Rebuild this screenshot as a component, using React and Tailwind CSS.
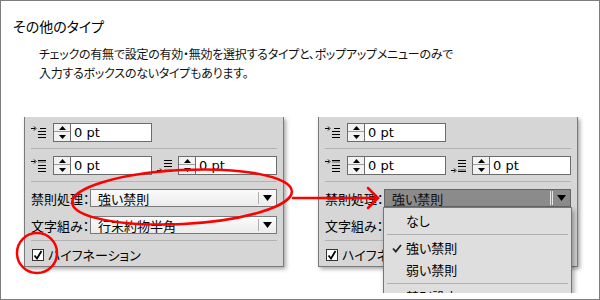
import React from "react";

const jp = "font-['Noto_Sans_CJK_JP',sans-serif] [font-feature-settings:'palt']";

const IndentIcon = ({ kind }) => (
  <svg width="16" height="14" viewBox="0 0 16 14" className="shrink-0">
    {kind !== "after" && (
      <g stroke="#000" strokeWidth="1" fill="none">
        <path d="M0 2.5h4" />
        <path d="M3 0.5l2 2-2 2" />
      </g>
    )}
    {kind === "after" && (
      <g stroke="#000" strokeWidth="1" fill="none">
        <path d="M0 11.5h4" />
        <path d="M3 9.5l2 2-2 2" />
      </g>
    )}
    <g fill="#000">
      {kind === "first" && (
        <>
          <rect x="9" y="2" width="6" height="1" />
          <rect x="7" y="5" width="8" height="1" />
          <rect x="7" y="8" width="8" height="1" />
          <rect x="7" y="11" width="8" height="1" />
        </>
      )}
      {kind === "before" && (
        <>
          <rect x="7" y="1" width="8" height="3" fill="#9a9a9a" />
          <rect x="7" y="1" width="8" height="1" />
          <rect x="7" y="6" width="8" height="1" />
          <rect x="7" y="9" width="8" height="1" />
          <rect x="7" y="12" width="8" height="1" />
        </>
      )}
      {kind === "after" && (
        <>
          <rect x="7" y="1" width="8" height="1" />
          <rect x="7" y="4" width="8" height="1" />
          <rect x="7" y="7" width="8" height="1" />
          <rect x="7" y="10" width="8" height="3" fill="#9a9a9a" />
          <rect x="7" y="12" width="8" height="1" />
        </>
      )}
    </g>
  </svg>
);

const Spin = () => (
  <div className="flex h-[19px] w-[99px] border border-[#6c6c6c] bg-white">
    <div className="flex w-[17px] flex-col border-r border-[#6c6c6c] bg-[#f2f2f2]">
      <div className="flex h-[8px] items-center justify-center border-b border-[#9c9c9c]">
        <svg width="7" height="4" viewBox="0 0 7 4"><path d="M3.5 0L7 4H0z" fill="#000" /></svg>
      </div>
      <div className="flex flex-1 items-center justify-center">
        <svg width="7" height="4" viewBox="0 0 7 4"><path d="M0 0h7L3.5 4z" fill="#000" /></svg>
      </div>
    </div>
    <div className="flex items-center pl-[3px] font-['DejaVu_Sans',sans-serif] text-[13px] leading-none text-black">
      0 pt
    </div>
  </div>
);

const Sep = ({ mt }) => <div className={`h-px bg-[#b3b3b3] ${mt}`} />;

const Arrow = () => (
  <svg width="9" height="6" viewBox="0 0 9 6"><path d="M0 0h9L4.5 6z" fill="#000" /></svg>
);

const Panel = ({ open }) => (
  <div className="relative h-[150px] w-[260px] shrink-0 border-x border-b border-[#7a7a7a] bg-[#d6d6d6] shadow-[2px_2px_4px_rgba(0,0,0,0.35)]">
    <div className="flex flex-col px-[6px] pt-[6px]">
      <div className="flex h-[19px] items-center">
        <div className="w-[22px]"><IndentIcon kind="first" /></div>
        <Spin />
      </div>
      <Sep mt="mt-[6px]" />
      <div className="mt-[7px] flex h-[19px] items-center">
        <div className="w-[22px]"><IndentIcon kind="before" /></div>
        <Spin />
        <div className="ml-[5px] w-[21px]"><IndentIcon kind="after" /></div>
        <Spin />
      </div>
      <Sep mt="mt-[6px]" />
      <div className="mt-[7px] flex h-[18px] items-center">
        <div className={`w-[59px] text-[13px] leading-none text-black ${jp}`}>禁則処理：</div>
        {open ? (
          <div className="flex h-[18px] w-[187px] items-center border border-[#666] bg-[#8b8b8b]">
            <div className={`flex-1 pl-[7px] text-[13px] leading-none text-[#111] ${jp}`}>強い禁則</div>
            <div className="mr-[1px] h-[14px] w-px bg-[#e6e6e6]" />
            <div className="h-[14px] w-px bg-[#e6e6e6]" />
            <div className="flex w-[17px] justify-center"><Arrow /></div>
          </div>
        ) : (
          <div className="flex h-[18px] w-[187px] items-center border border-[#7a7a7a] bg-gradient-to-b from-[#fbfbfb] to-[#ececec]">
            <div className={`flex-1 pl-[7px] text-[13px] leading-none text-black ${jp}`}>強い禁則</div>
            <div className="h-[12px] w-px bg-[#b0b0b0]" />
            <div className="flex w-[17px] justify-center"><Arrow /></div>
          </div>
        )}
      </div>
      <div className="mt-[9px] flex h-[18px] items-center">
        <div className={`w-[59px] text-[13px] leading-none text-black ${jp}`}>文字組み：</div>
        <div className="flex h-[18px] w-[187px] items-center border border-[#7a7a7a] bg-gradient-to-b from-[#fbfbfb] to-[#ececec]">
          <div className={`flex-1 pl-[7px] text-[13px] leading-none text-black ${jp}`}>行末約物半角</div>
          <div className="h-[12px] w-px bg-[#b0b0b0]" />
          <div className="flex w-[17px] justify-center"><Arrow /></div>
        </div>
      </div>
      <Sep mt="mt-[6px]" />
      <div className="mt-[7px] flex h-[13px] items-center">
        <div className="ml-[1px] flex h-[12px] w-[12px] items-center justify-center border border-[#333] bg-white">
          <svg width="10" height="10" viewBox="0 0 10 10">
            <path d="M1.5 5.5L4 8.5 8.5 1" stroke="#000" strokeWidth="1.8" fill="none" />
          </svg>
        </div>
        <div className={`ml-[4px] text-[13px] leading-none text-black ${jp}`}>ハイフネーション</div>
      </div>
    </div>

    {open && (
      <div className="absolute left-[64px] top-[90px] w-[189px] border border-[#777] bg-[#dedede] pt-[2px] shadow-[2px_3px_5px_rgba(0,0,0,0.35)]">
        <div className={`flex h-[22px] items-center pl-[22px] text-[13px] text-black ${jp}`}>なし</div>
        <div className="flex h-[5px] items-center px-[3px]"><div className="h-px w-full bg-[#b0b0b0]" /></div>
        <div className="relative flex h-[22px] items-center pl-[22px] text-[13px] text-black">
          <svg className="absolute left-[8px] top-[7px]" width="10" height="9" viewBox="0 0 10 9">
            <path d="M1 4.5L3.8 7.5 9 1" stroke="#222" strokeWidth="1.8" fill="none" />
          </svg>
          <span className={jp}>強い禁則</span>
        </div>
        <div className={`flex h-[22px] items-center pl-[22px] text-[13px] text-black ${jp}`}>弱い禁則</div>
        <div className="flex h-[5px] items-center px-[3px]"><div className="h-px w-full bg-[#b0b0b0]" /></div>
        <div className={`flex h-[22px] items-center pl-[22px] text-[13px] text-black ${jp}`}>禁則設定...</div>
      </div>
    )}
  </div>
);

export default function App() {
  return (
    <div className="relative h-[300px] w-[600px] overflow-hidden border border-[#7d7d7d] bg-white">
      <div className={`ml-[12px] mt-[16px] text-[14px] leading-[18px] text-black ${jp}`}>その他のタイプ</div>
      <div className={`ml-[38px] mt-[9px] text-[12px] leading-[19px] tracking-[-0.25px] text-[#111] ${jp}`}>
        <p>チェックの有無で設定の有効・無効を選択するタイプと、ポップアップメニューのみで</p>
        <p>入力するボックスのないタイプもあります。</p>
      </div>
      <div className="mt-[35px] flex h-[176px] gap-[34px] overflow-hidden pl-[23px]">
        <Panel />
        <Panel open />
      </div>

      <svg className="pointer-events-none absolute left-0 top-0" width="600" height="300" viewBox="0 0 600 300">
        <g stroke="#f00" strokeWidth="2.5" fill="none" strokeLinecap="round">
          <ellipse cx="181" cy="196" rx="110" ry="27" transform="rotate(-3 181 196)" />
          <ellipse cx="36" cy="252" rx="20" ry="20" />
          <path d="M292 197H377" />
          <path d="M367 187L377 197 367 207" />
        </g>
      </svg>
    </div>
  );
}
